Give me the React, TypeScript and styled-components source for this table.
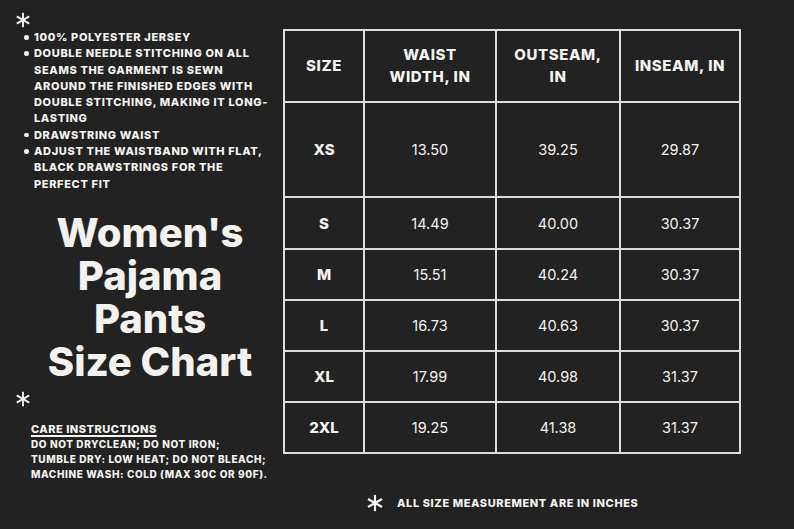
import React from 'react'
import styled, { createGlobalStyle } from 'styled-components'

const GlobalStyle = createGlobalStyle`
  html, body {
    margin: 0;
    padding: 0;
    background: #222222;
  }
  body {
    font-family: Inter, 'Noto Sans', sans-serif;
    color: #f4f2ee;
  }
`

// each feature is a list of its printed lines
const features = [
  ['100% POLYESTER JERSEY'],
  [
    'DOUBLE NEEDLE STITCHING ON ALL',
    'SEAMS THE GARMENT IS SEWN',
    'AROUND THE FINISHED EDGES WITH',
    'DOUBLE STITCHING, MAKING IT LONG-',
    'LASTING',
  ],
  ['DRAWSTRING WAIST'],
  ['ADJUST THE WAISTBAND WITH FLAT,', 'BLACK DRAWSTRINGS FOR THE', 'PERFECT FIT'],
]

const rows = [
  { size: 'XS', waist: '13.50', outseam: '39.25', inseam: '29.87', height: 95 },
  { size: 'S', waist: '14.49', outseam: '40.00', inseam: '30.37', height: 52 },
  { size: 'M', waist: '15.51', outseam: '40.24', inseam: '30.37', height: 51 },
  { size: 'L', waist: '16.73', outseam: '40.63', inseam: '30.37', height: 51 },
  { size: 'XL', waist: '17.99', outseam: '40.98', inseam: '31.37', height: 51 },
  { size: '2XL', waist: '19.25', outseam: '41.38', inseam: '31.37', height: 51 },
]

const Asterisk: React.FC<{ size?: number }> = ({ size = 16 }) => (
  <svg width={size} height={size} viewBox="0 0 20 20">
    <g stroke="#f4f2ee" strokeWidth="2.4" strokeLinecap="butt">
      <line x1="10" y1="1" x2="10" y2="19" />
      <line x1="2.2" y1="5.5" x2="17.8" y2="14.5" />
      <line x1="2.2" y1="14.5" x2="17.8" y2="5.5" />
    </g>
  </svg>
)

const App: React.FC = () => {
  return (
    <Page>
      <GlobalStyle />
      <LeftColumn>
        <StarWrap>
          <Asterisk />
        </StarWrap>
        <FeatureList>
          {features.map((lines) => (
            <li key={lines[0]}>
              {lines.map((l) => (
                <div key={l}>{l}</div>
              ))}
            </li>
          ))}
        </FeatureList>
        <Title>
          Women's
          <br />
          Pajama
          <br />
          Pants
          <br />
          Size Chart
        </Title>
        <StarWrap $gap={8}>
          <Asterisk />
        </StarWrap>
        <Care>
          <CareHeading>CARE INSTRUCTIONS</CareHeading>
          <div>DO NOT DRYCLEAN; DO NOT IRON;</div>
          <div>TUMBLE DRY: LOW HEAT; DO NOT BLEACH;</div>
          <div>MACHINE WASH: COLD (MAX 30C OR 90F).</div>
        </Care>
      </LeftColumn>

      <RightColumn>
        <SizeTable>
          <colgroup>
            <col style={{ width: 80 }} />
            <col style={{ width: 132 }} />
            <col style={{ width: 124 }} />
            <col style={{ width: 120 }} />
          </colgroup>
          <thead>
            <tr style={{ height: 72 }}>
              <HeadCell>SIZE</HeadCell>
              <HeadCell>
                WAIST
                <br />
                WIDTH, IN
              </HeadCell>
              <HeadCell>
                OUTSEAM,
                <br />
                IN
              </HeadCell>
              <HeadCell>INSEAM, IN</HeadCell>
            </tr>
          </thead>
          <tbody>
            {rows.map((r) => (
              <tr key={r.size} style={{ height: r.height }}>
                <SizeCell>{r.size}</SizeCell>
                <ValueCell>{r.waist}</ValueCell>
                <ValueCell>{r.outseam}</ValueCell>
                <ValueCell>{r.inseam}</ValueCell>
              </tr>
            ))}
          </tbody>
        </SizeTable>
        <Footnote>
          <Asterisk size={18} />
          <span>ALL SIZE MEASUREMENT ARE IN INCHES</span>
        </Footnote>
      </RightColumn>
    </Page>
  )
}

const Page = styled.div`
  width: 794px;
  height: 529px;
  background: #222222;
  display: grid;
  grid-template-columns: 283px 1fr;
  overflow: hidden;
`

const LeftColumn = styled.div`
  display: flex;
  flex-direction: column;
  padding: 12px 0 0 15px;
`

const StarWrap = styled.div<{ $gap?: number }>`
  display: flex;
  height: 16px;
  margin-top: ${(p) => p.$gap || 0}px;
`

const FeatureList = styled.ul`
  margin: 1px 0 0 0;
  padding: 0 0 0 19px;
  list-style: none;
  font-size: 11px;
  font-weight: 800;
  line-height: 16.3px;
  letter-spacing: 0.65px;
  white-space: nowrap;

  li {
    position: relative;
  }
  li::before {
    content: '';
    position: absolute;
    left: -10px;
    top: 6px;
    width: 4.5px;
    height: 4.5px;
    border-radius: 50%;
    background: #f4f2ee;
  }
`

const Title = styled.h1`
  margin: 19px 0 0 0;
  width: 270px;
  text-align: center;
  font-size: 40px;
  font-weight: 800;
  line-height: 43px;
  letter-spacing: 0;
`

const Care = styled.div`
  margin: 15px 0 0 16px;
  font-size: 10px;
  font-weight: 800;
  line-height: 15px;
  letter-spacing: 0.6px;
  white-space: nowrap;
`

const CareHeading = styled.div`
  text-decoration: underline;
  text-decoration-thickness: 1.5px;
  text-underline-offset: 2px;
  font-size: 11px;
  letter-spacing: 0.5px;
`

const RightColumn = styled.div`
  display: flex;
  flex-direction: column;
  padding-top: 29px;
`

const SizeTable = styled.table`
  width: 458px;
  border-collapse: collapse;
  table-layout: fixed;

  th,
  td {
    border: 2px solid #dcdcdc;
    text-align: center;
    vertical-align: middle;
    padding: 0;
  }
`

const HeadCell = styled.th`
  font-size: 15px;
  font-weight: 800;
  line-height: 22px;
  letter-spacing: 0.6px;
`

const SizeCell = styled.td`
  font-size: 15px;
  font-weight: 800;
`

const ValueCell = styled.td`
  font-size: 14.5px;
  font-weight: 400;
`

const Footnote = styled.div`
  display: flex;
  align-items: center;
  gap: 13px;
  margin: 40px 0 0 83px;
  font-size: 11px;
  font-weight: 800;
  letter-spacing: 0.6px;
`

export default App
